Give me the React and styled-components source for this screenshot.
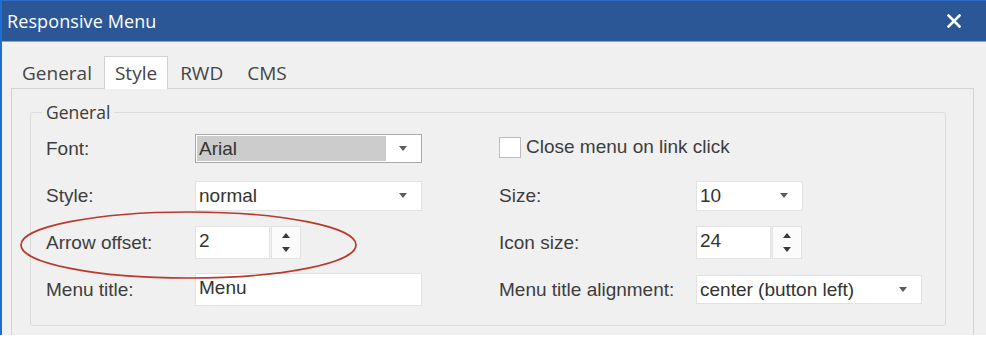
import React from "react";
import styled, { createGlobalStyle } from "styled-components";

const GlobalStyle = createGlobalStyle`
  html, body { margin: 0; padding: 0; background: #ffffff; }
  * { box-sizing: border-box; }
`;

const Window = styled.div`
  width: 986px;
  height: 335px;
  border-left: 2px solid #1f6fd2;
  background: #f0f0f0;
  display: flex;
  flex-direction: column;
  overflow: hidden;
`;

const TitleBar = styled.div`
  height: 42px;
  flex: none;
  background: #2b5797;
  border-top: 1px solid #2f6cc9;
  border-bottom: 1px solid #8aa3c8;
  display: flex;
  align-items: center;
  justify-content: space-between;
  padding: 0 25px 0 5px;
`;

const Title = styled.div`
  font-family: "Open Sans", "Noto Sans", sans-serif;
  font-size: 18px;
  color: #ffffff;
  letter-spacing: 0.1px;
`;

const TabBar = styled.div`
  display: flex;
  align-items: flex-end;
  height: 32px;
  margin: 14px 0 0 8px;
  position: relative;
  z-index: 1;
`;

const Tab = styled.div`
  height: ${(p) => (p.$active ? "33px" : "32px")};
  margin-bottom: ${(p) => (p.$active ? "-1px" : "0")};
  padding: 0 ${(p) => (p.$active ? "10px" : "11px")};
  display: flex;
  align-items: center;
  font-family: "Open Sans", "Noto Sans", sans-serif;
  font-size: 19px;
  color: #444;
  background: ${(p) => (p.$active ? "#ffffff" : "transparent")};
  border: ${(p) => (p.$active ? "1px solid #d3d3d3" : "1px solid transparent")};
  border-bottom: none;
`;

const Panel = styled.div`
  flex: 1;
  margin: 0 12px 0 9px;
  border: 1px solid #d3d3d3;
  border-bottom: none;
  padding: 13px 27px 0 18px;
`;

const Group = styled.fieldset`
  margin: 0;
  padding: 3px 15px 12px 15px;
  border: 1px solid #dcdcdc;
  border-radius: 3px;
  min-width: 0;
`;

const Legend = styled.legend`
  margin-left: -4px;
  padding: 0 4px;
  font-family: "Open Sans", "Noto Sans", sans-serif;
  font-size: 17.5px;
  line-height: 20px;
  color: #3a3a3a;
`;

const Grid = styled.div`
  position: relative;
  display: grid;
  grid-template-columns: 149px 304px 197px 1fr;
  grid-auto-rows: 47px;
  align-items: center;
`;

const Label = styled.div`
  font-family: "Liberation Sans", Arial, sans-serif;
  font-size: 19px;
  color: #3d3d3d;
  white-space: nowrap;
`;

const Select = styled.div`
  width: ${(p) => p.$w}px;
  height: ${(p) => p.$h}px;
  display: flex;
  align-items: stretch;
  background: #ffffff;
  border: 1px solid ${(p) => (p.$focused ? "#a9a9a9" : "#e2e2e2")};
  padding: 1px;
`;

const SelectValue = styled.div`
  flex: 1;
  display: flex;
  align-items: center;
  padding-left: 2px;
  background: ${(p) => (p.$focused ? "#cccccc" : "transparent")};
  font-family: "Liberation Sans", Arial, sans-serif;
  font-size: 19px;
  color: #333;
  white-space: nowrap;
`;

const SelectArrow = styled.div`
  width: 34px;
  flex: none;
  display: flex;
  align-items: center;
  justify-content: center;
  &::after {
    content: "";
    border-left: 4.5px solid transparent;
    border-right: 4.5px solid transparent;
    border-top: 5px solid #5c5c5c;
  }
`;

const Spin = styled.div`
  display: flex;
  gap: 1px;
  height: 33px;
`;

const SpinInput = styled.div`
  width: 75px;
  height: 100%;
  background: #ffffff;
  border: 1px solid #e2e2e2;
  padding: 3px 3px 0;
  font-family: "Liberation Sans", Arial, sans-serif;
  font-size: 19px;
  line-height: 22px;
  color: #333;
`;

const SpinButtons = styled.div`
  width: 30px;
  height: 100%;
  background: #fbfbfb;
  border: 1px solid #e2e2e2;
  display: flex;
  flex-direction: column;
  align-items: center;
  justify-content: center;
  gap: 9px;
`;

const Triangle = styled.span`
  display: block;
  width: 0;
  height: 0;
  border-left: 4.5px solid transparent;
  border-right: 4.5px solid transparent;
  ${(p) =>
    p.$up
      ? "border-bottom: 5px solid #3a3a3a;"
      : "border-top: 5px solid #3a3a3a;"}
`;

const TextInput = styled.div`
  width: ${(p) => p.$w}px;
  height: 33px;
  background: #ffffff;
  border: 1px solid #e2e2e2;
  padding: 3px 3px 0;
  font-family: "Liberation Sans", Arial, sans-serif;
  font-size: 19px;
  line-height: 22px;
  color: #333;
`;

const CheckRow = styled.label`
  grid-column: span 2;
  display: flex;
  align-items: center;
  gap: 5px;
  margin-top: -3px;
  font-family: "Liberation Sans", Arial, sans-serif;
  font-size: 19px;
  color: #3d3d3d;
`;

const CheckBox = styled.span`
  width: 22px;
  height: 21px;
  background: #ffffff;
  border: 1px solid #bdbdbd;
  flex: none;
`;

const Annotation = styled.svg`
  position: absolute;
  left: -31px;
  top: 84px;
  width: 347px;
  height: 72px;
  overflow: visible;
  pointer-events: none;
`;

const CloseIcon = () => (
  <svg width="14" height="14" viewBox="0 0 14 14">
    <path d="M1.5 1.5 L12.5 12.5 M12.5 1.5 L1.5 12.5" stroke="#fff" strokeWidth="2.6" strokeLinecap="square" />
  </svg>
);

const Dropdown = ({ w, h, focused, value }) => (
  <Select $w={w} $h={h} $focused={focused}>
    <SelectValue $focused={focused}>{value}</SelectValue>
    <SelectArrow />
  </Select>
);

const Spinner = ({ value }) => (
  <Spin>
    <SpinInput>{value}</SpinInput>
    <SpinButtons>
      <Triangle $up />
      <Triangle />
    </SpinButtons>
  </Spin>
);

export default function App() {
  return (
    <>
      <GlobalStyle />
      <Window>
        <TitleBar>
          <Title>Responsive Menu</Title>
          <CloseIcon />
        </TitleBar>
        <TabBar>
          <Tab>General</Tab>
          <Tab $active>Style</Tab>
          <Tab>RWD</Tab>
          <Tab>CMS</Tab>
        </TabBar>
        <Panel>
          <Group>
            <Legend>General</Legend>
            <Grid>
              <Label>Font:</Label>
              <Dropdown w={227} h={29} focused value="Arial" />
              <CheckRow>
                <CheckBox />
                Close menu on link click
              </CheckRow>

              <Label>Style:</Label>
              <Dropdown w={227} h={30} value="normal" />
              <Label>Size:</Label>
              <Dropdown w={107} h={30} value="10" />

              <Label>Arrow offset:</Label>
              <Spinner value="2" />
              <Label>Icon size:</Label>
              <Spinner value="24" />

              <Label>Menu title:</Label>
              <TextInput $w={227}>Menu</TextInput>
              <Label>Menu title alignment:</Label>
              <Dropdown w={226} h={29} value="center (button left)" />

              <Annotation viewBox="0 0 347 72">
                <ellipse cx="173.5" cy="36" rx="167.5" ry="33" fill="none" stroke="#b93a2d" strokeWidth="1.7" />
              </Annotation>
            </Grid>
          </Group>
        </Panel>
      </Window>
    </>
  );
}
